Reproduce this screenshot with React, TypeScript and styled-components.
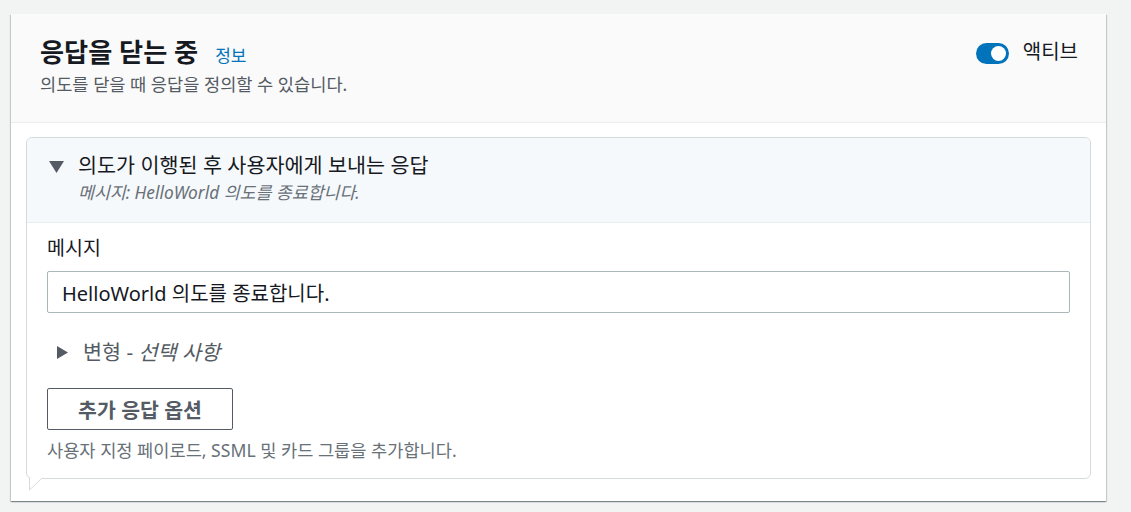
import React from "react";
import styled, { createGlobalStyle } from "styled-components";

const Global = createGlobalStyle`
  html, body { margin: 0; padding: 0; background: #f2f3f3; }
  body { font-family: "Noto Sans", "Noto Sans CJK KR", sans-serif; color: #16191f; }
  * { box-sizing: border-box; }
`;

const Page = styled.div`
  padding: 14px 25px 11px 11px;
`;

const Card = styled.section`
  background: #fff;
  box-shadow: 0 1px 1px 0 rgba(0, 28, 36, 0.3), 1px 1px 1px 0 rgba(0, 28, 36, 0.15),
    -1px 1px 1px 0 rgba(0, 28, 36, 0.15);
`;

const CardHeader = styled.header`
  display: flex;
  justify-content: space-between;
  align-items: flex-start;
  background: #fafafa;
  border-bottom: 1px solid #eaeded;
  padding: 23px 28px 27px 29px;
`;

const TitleBlock = styled.div`
  display: flex;
  flex-direction: column;
  gap: 6px;
`;

const TitleRow = styled.div`
  display: flex;
  align-items: baseline;
  gap: 17px;
`;

const Title = styled.h2`
  margin: 0;
  font-size: 26.2px;
  line-height: 30px;
  font-weight: 700;
  color: #16191f;
`;

const InfoLink = styled.a`
  font-size: 17px;
  font-weight: 400;
  color: #0073bb;
  text-decoration: none;
`;

const Description = styled.p`
  margin: 0;
  font-size: 17.6px;
  line-height: 22px;
  color: #545b64;
`;

const ToggleLabel = styled.label`
  display: flex;
  align-items: center;
  gap: 14px;
  font-size: 20px;
  line-height: 30px;
  color: #16191f;
`;

const Track = styled.span<{ $on: boolean }>`
  display: inline-flex;
  align-items: center;
  justify-content: ${(p) => (p.$on ? "flex-end" : "flex-start")};
  width: 33px;
  height: 21px;
  margin-top: 2px;
  border-radius: 11px;
  padding: 0 3px;
  background: ${(p) => (p.$on ? "#0073bb" : "#aab7b8")};
`;

const Knob = styled.span`
  width: 15px;
  height: 15px;
  border-radius: 50%;
  background: #fff;
`;

const CardBody = styled.div`
  padding: 14px 15px 22px 15px;
`;

const Bubble = styled.div`
  position: relative;
  border: 1px solid #d5dbdb;
  border-radius: 6px;
  background: #fff;
`;

const Tail = styled.svg`
  position: absolute;
  left: 2px;
  bottom: -13px;
  width: 13px;
  height: 13px;
`;

const BubbleHeader = styled.div`
  display: flex;
  align-items: flex-start;
  gap: 14px;
  background: #f6f9fc;
  border-bottom: 1px solid #eaeded;
  border-radius: 6px 6px 0 0;
  padding: 13px 20px 18px 22px;
`;

const Caret = styled.svg`
  flex: none;
  margin-top: 10px;
`;

const HeaderText = styled.div`
  display: flex;
  flex-direction: column;
  gap: 3px;
`;

const BubbleTitle = styled.div`
  font-size: 20.7px;
  line-height: 28px;
  color: #16191f;
`;

const Subtitle = styled.div`
  font-size: 17.3px;
  line-height: 22px;
  font-style: italic;
  color: #687078;
`;

const BubbleBody = styled.div`
  display: flex;
  flex-direction: column;
  align-items: flex-start;
  padding: 12px 20px 16px 20px;
`;

const FieldLabel = styled.div`
  font-size: 19.5px;
  line-height: 26px;
  color: #16191f;
  margin-bottom: 10px;
`;

const Input = styled.div`
  align-self: stretch;
  height: 42px;
  display: flex;
  align-items: center;
  padding: 0 14px;
  border: 1px solid #aab7b8;
  border-radius: 2px;
  font-size: 20px;
  color: #16191f;
`;

const Expander = styled.div`
  display: flex;
  align-items: center;
  gap: 15px;
  margin: 25px 0 0 10px;
  font-size: 20.7px;
  line-height: 28px;
  color: #545b64;
`;

const Optional = styled.i`
  font-style: italic;
`;

const Button = styled.button`
  margin-top: 22px;
  width: 186px;
  height: 42px;
  border: 1px solid #545b64;
  border-radius: 2px;
  background: #fff;
  font-family: inherit;
  font-size: 20.5px;
  font-weight: 700;
  color: #545b64;
`;

const Help = styled.div`
  margin-top: 8px;
  font-size: 17.6px;
  line-height: 24px;
  color: #687078;
`;

export default function App() {
  return (
    <>
      <Global />
      <Page>
        <Card>
          <CardHeader>
            <TitleBlock>
              <TitleRow>
                <Title>응답을 닫는 중</Title>
                <InfoLink href="#">정보</InfoLink>
              </TitleRow>
              <Description>의도를 닫을 때 응답을 정의할 수 있습니다.</Description>
            </TitleBlock>
            <ToggleLabel>
              <Track $on>
                <Knob />
              </Track>
              액티브
            </ToggleLabel>
          </CardHeader>
          <CardBody>
            <Bubble>
              <BubbleHeader>
                <Caret width="15" height="12" viewBox="0 0 15 12">
                  <path d="M0 0h15L7.5 12z" fill="#545b64" />
                </Caret>
                <HeaderText>
                  <BubbleTitle>의도가 이행된 후 사용자에게 보내는 응답</BubbleTitle>
                  <Subtitle>메시지: HelloWorld 의도를 종료합니다.</Subtitle>
                </HeaderText>
              </BubbleHeader>
              <BubbleBody>
                <FieldLabel>메시지</FieldLabel>
                <Input>HelloWorld 의도를 종료합니다.</Input>
                <Expander>
                  <svg width="11" height="13" viewBox="0 0 11 13">
                    <path d="M0 0l11 6.5L0 13z" fill="#545b64" />
                  </svg>
                  <span>
                    변형 - <Optional>선택 사항</Optional>
                  </span>
                </Expander>
                <Button>추가 응답 옵션</Button>
                <Help>사용자 지정 페이로드, SSML 및 카드 그룹을 추가합니다.</Help>
              </BubbleBody>
              <Tail viewBox="0 0 13 13">
                <path d="M0 0H13L1 12H0Z" fill="#fff" />
                <path d="M0.5 0V12L12.5 0.5" fill="none" stroke="#d5dbdb" strokeWidth="1" />
              </Tail>
            </Bubble>
          </CardBody>
        </Card>
      </Page>
    </>
  );
}
